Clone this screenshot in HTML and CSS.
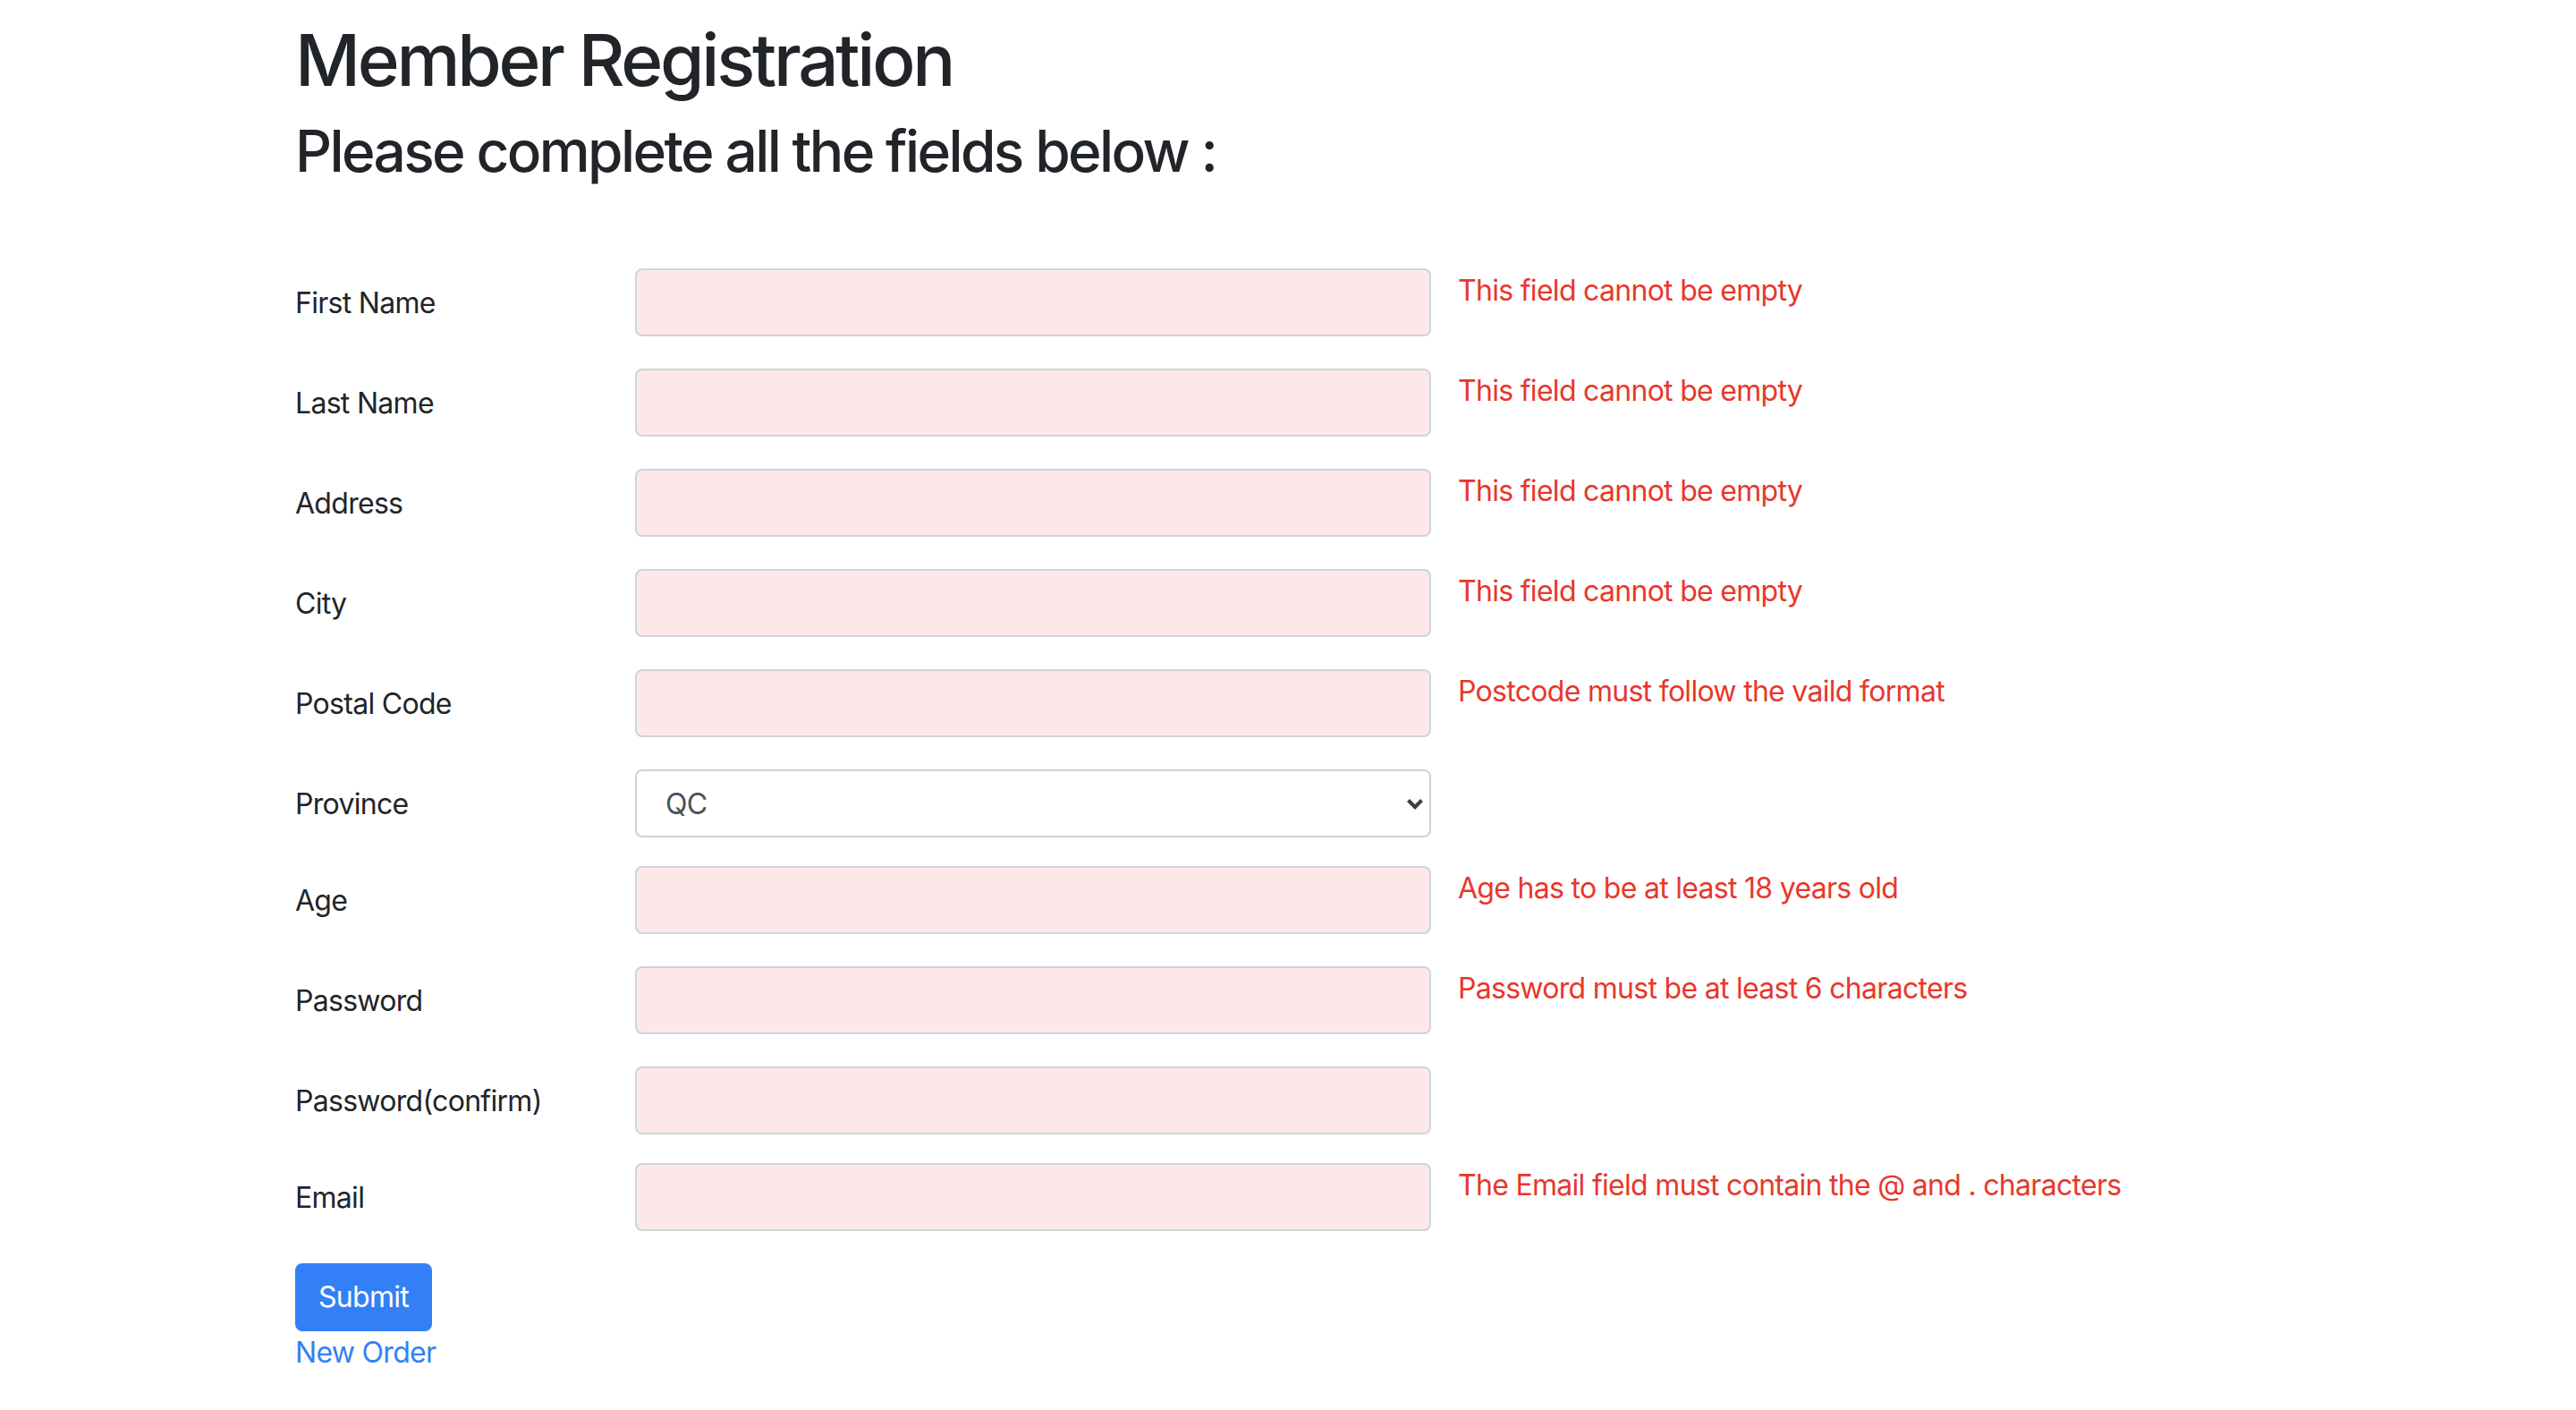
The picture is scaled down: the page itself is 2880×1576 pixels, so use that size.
FILE: index.html
```html
<!DOCTYPE html>
<html lang="en">
<head>
<meta charset="utf-8">
<title>Member Registration</title>
<link rel="stylesheet" href="styles.css">
</head>
<body>
<div class="container">
  <h1 class="title">Member Registration</h1>
  <h2 class="subtitle">Please complete all the fields below :</h2>
  <form class="form">
    <div class="row has-error">
      <label class="label">First Name</label>
      <input class="field" type="text">
      <div class="error">This field cannot be empty</div>
    </div>
    <div class="row has-error">
      <label class="label">Last Name</label>
      <input class="field" type="text">
      <div class="error">This field cannot be empty</div>
    </div>
    <div class="row has-error">
      <label class="label">Address</label>
      <input class="field" type="text">
      <div class="error">This field cannot be empty</div>
    </div>
    <div class="row has-error">
      <label class="label">City</label>
      <input class="field" type="text">
      <div class="error">This field cannot be empty</div>
    </div>
    <div class="row has-error">
      <label class="label">Postal Code</label>
      <input class="field" type="text">
      <div class="error">Postcode must follow the vaild format</div>
    </div>
    <div class="row">
      <label class="label">Province</label>
      <div class="select-wrap">
        <select class="field select">
          <option>QC</option>
        </select>
        <svg class="chevron" width="20" height="13" viewBox="0 0 20 13"><polyline points="2.5,2.5 10,10 17.5,2.5" fill="none" stroke="#3c3f44" stroke-width="4.2"/></svg>
      </div>
    </div>
    <div class="row has-error">
      <label class="label">Age</label>
      <input class="field" type="text">
      <div class="error">Age has to be at least 18 years old</div>
    </div>
    <div class="row has-error">
      <label class="label">Password</label>
      <input class="field" type="password">
      <div class="error">Password must be at least 6 characters</div>
    </div>
    <div class="row">
      <label class="label">Password(confirm)</label>
      <input class="field" type="password">
    </div>
    <div class="row has-error">
      <label class="label">Email</label>
      <input class="field" type="text">
      <div class="error">The Email field must contain the @ and . characters</div>
    </div>
    <button class="btn" type="button">Submit</button>
    <a class="link" href="#">New Order</a>
  </form>
</div>
</body>
</html>
```
FILE: styles.css
```css
* { box-sizing: border-box; }
html, body {
  margin: 0;
  padding: 0;
  background: #ffffff;
}
body {
  font-family: Inter, "Liberation Sans", Arial, sans-serif;
  font-size: 32px;
  line-height: 48px;
  letter-spacing: -0.022em;
  color: #212529;
}
.container {
  width: 2280px;
  margin: 0 auto;
  padding: 0 30px;
}
.title {
  font-size: 80px;
  font-weight: 500;
  line-height: 96px;
  letter-spacing: -0.041em;
  margin: 19px 0 15px;
}
.subtitle {
  font-size: 64px;
  font-weight: 500;
  line-height: 77px;
  letter-spacing: -0.041em;
  margin: 0;
}
.form {
  padding-top: 93px;
}
.row {
  display: flex;
  align-items: flex-start;
  height: 76px;
  margin-bottom: 32px;
}
.row.has-error {
  height: 80px;
}
.label {
  flex: 0 0 380px;
  padding-top: 15px;
  line-height: 48px;
}
.field {
  flex: 0 0 890px;
  width: 890px;
  height: 76px;
  border: 2px solid #ced4da;
  border-radius: 8px;
  background: #fce8e8;
  font-family: inherit;
  font-size: 32px;
  padding: 0 24px;
  margin: 0;
  outline: none;
}
.error {
  margin-left: 30px;
  padding-top: 1px;
  color: #e8372c;
  line-height: 48px;
  white-space: nowrap;
}
.select-wrap {
  position: relative;
  flex: 0 0 890px;
  height: 76px;
}
.select {
  display: block;
  -webkit-appearance: none;
  appearance: none;
  background: #ffffff;
  color: #495057;
  padding-left: 32px;
  letter-spacing: inherit;
}
.chevron {
  position: absolute;
  right: 8px;
  top: 32px;
}
.btn {
  display: block;
  height: 76px;
  padding: 0 24px;
  border: 2px solid #3380f6;
  border-radius: 8px;
  background: #3380f6;
  color: #ffffff;
  font-family: inherit;
  font-size: 32px;
  line-height: 48px;
  letter-spacing: inherit;
  margin: 0;
}
.link {
  display: block;
  width: max-content;
  color: #3380f6;
  text-decoration: none;
  line-height: 48px;
}
```
